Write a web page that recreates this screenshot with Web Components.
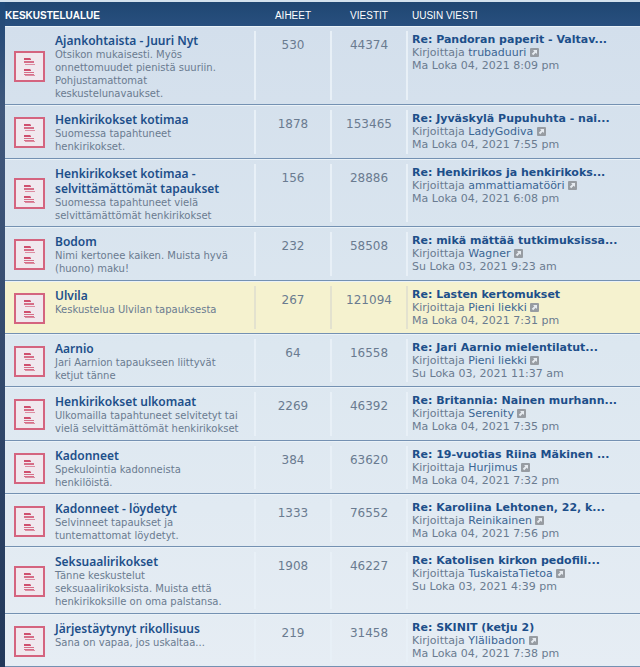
<!DOCTYPE html>
<html lang="fi">
<head>
<meta charset="utf-8">
<meta name="viewport" content="width=device-width, initial-scale=1">
<title>Keskustelualue</title>
<style>
  body {
    margin: 0;
    background-color: #e6eef5;
    font-family: "DejaVu Sans", Verdana, sans-serif;
    font-size: 11px;
    line-height: 13px;
    color: #6a7b90;
  }
</style>
</head>
<body>

<forum-list></forum-list>

<script>
const forums = [
  { title: "Ajankohtaista - Juuri Nyt", text: "Otsikon mukaisesti. Myös onnettomuudet pienistä suuriin. Pohjustamattomat keskustelunavaukset.", topics: 530, posts: 44374, last: "Re: Pandoran paperit - Valtav...", author: "trubaduuri", date: "Ma Loka 04, 2021 8:09 pm" },
  { title: "Henkirikokset kotimaa", text: "Suomessa tapahtuneet henkirikokset.", topics: 1878, posts: 153465, last: "Re: Jyväskylä Pupuhuhta - nai...", author: "LadyGodiva", date: "Ma Loka 04, 2021 7:55 pm" },
  { title: "Henkirikokset kotimaa - selvittämättömät tapaukset", text: "Suomessa tapahtuneet vielä selvittämättömät henkirikokset", topics: 156, posts: 28886, last: "Re: Henkirikos ja henkirikoks...", author: "ammattiamatööri", date: "Ma Loka 04, 2021 6:08 pm" },
  { title: "Bodom", text: "Nimi kertonee kaiken. Muista hyvä (huono) maku!", topics: 232, posts: 58508, last: "Re: mikä mättää tutkimuksissa...", author: "Wagner", date: "Su Loka 03, 2021 9:23 am" },
  { title: "Ulvila", text: "Keskustelua Ulvilan tapauksesta", topics: 267, posts: 121094, last: "Re: Lasten kertomukset", author: "Pieni liekki", date: "Ma Loka 04, 2021 7:31 pm", active: true },
  { title: "Aarnio", text: "Jari Aarnion tapaukseen liittyvät ketjut tänne", topics: 64, posts: 16558, last: "Re: Jari Aarnio mielentilatut...", author: "Pieni liekki", date: "Su Loka 03, 2021 11:37 am" },
  { title: "Henkirikokset ulkomaat", text: "Ulkomailla tapahtuneet selvitetyt tai vielä selvittämättömät henkirikokset", topics: 2269, posts: 46392, last: "Re: Britannia: Nainen murhann...", author: "Serenity", date: "Ma Loka 04, 2021 7:35 pm" },
  { title: "Kadonneet", text: "Spekulointia kadonneista henkilöistä.", topics: 384, posts: 63620, last: "Re: 19-vuotias Riina Mäkinen ...", author: "Hurjimus", date: "Ma Loka 04, 2021 7:32 pm" },
  { title: "Kadonneet - löydetyt", text: "Selvinneet tapaukset ja tuntemattomat löydetyt.", topics: 1333, posts: 76552, last: "Re: Karoliina Lehtonen, 22, k...", author: "Reinikainen", date: "Ma Loka 04, 2021 7:56 pm" },
  { title: "Seksuaalirikokset", text: "Tänne keskustelut seksuaalirikoksista. Muista että henkirikoksille on oma palstansa.", topics: 1908, posts: 46227, last: "Re: Katolisen kirkon pedofili...", author: "TuskaistaTietoa", date: "Su Loka 03, 2021 4:39 pm" },
  { title: "Järjestäytynyt rikollisuus", text: "Sana on vapaa, jos uskaltaa...", topics: 219, posts: 31458, last: "Re: SKINIT (ketju 2)", author: "Ylälibadon", date: "Ma Loka 04, 2021 7:38 pm" }
];

const iconTemplate = document.createElement("template");
iconTemplate.innerHTML = `
<style>
  :host {
    display: block;
    flex: none;
    width: 31px;
    height: 31px;
  }

  svg {
    display: block;
  }
</style>
<svg width="31" height="31" viewBox="0 0 31 31" aria-hidden="true">
  <rect x="1" y="1" width="29" height="29" fill="#f0e8ee" stroke="#d4647f" stroke-width="2"/>
  <g fill="#cf4f6e">
    <path d="M10 7h6l1 1v1h-7zM10 18h6l1 1v1h-7z"/>
    <path d="M10 10h10v2H10zM10 21h10v1H10zM10 23h10v1H10z" opacity=".8"/>
    <path d="M11 13h10v1H11zM11 24h10v1H11z" opacity=".6"/>
  </g>
</svg>
`;

class ForumIcon extends HTMLElement {
  connectedCallback() {
    this.attachShadow({ mode: "open" }).appendChild(iconTemplate.content.cloneNode(true));
  }
}

const infoTemplate = document.createElement("template");
infoTemplate.innerHTML = `
<style>
  :host {
    display: flex;
    align-items: center;
    gap: 10px;
    min-height: 41px;
  }

  .text {
    align-self: flex-start;
    font-size: 10px;
  }

  ::slotted(a) {
    display: block;
    font-family: "Noto Sans", "Open Sans", sans-serif;
    font-size: 12px;
    font-weight: 600;
    line-height: 15px;
    color: #1d4f8a;
    text-decoration: none;
  }

  ::slotted(a:hover) {
    text-decoration: underline;
  }
</style>
<forum-icon></forum-icon>
<div class="text">
  <slot name="title"></slot>
  <slot></slot>
</div>
`;

class ForumInfo extends HTMLElement {
  connectedCallback() {
    this.attachShadow({ mode: "open" }).appendChild(infoTemplate.content.cloneNode(true));
  }
}

const lastPostTemplate = document.createElement("template");
lastPostTemplate.innerHTML = `
<style>
  :host {
    display: block;
    white-space: nowrap;
  }

  ::slotted(a) {
    color: #3a6593;
    text-decoration: none;
  }

  ::slotted(a[slot="subject"]) {
    display: block;
    font-weight: bold;
    color: #1d4f8a;
  }

  ::slotted(a:hover) {
    text-decoration: underline;
  }

  svg {
    vertical-align: -1px;
  }
</style>
<slot name="subject"></slot>
<div>Kirjoittaja <slot name="author"></slot>
  <a href="#" aria-label="Näytä uusin viesti"><svg width="9" height="9" viewBox="0 0 9 9" aria-hidden="true">
    <rect width="9" height="9" rx="1" fill="#979ca2"/>
    <path d="M3 2h4v4L5.700 4.700 3.200 7.200 1.800 5.800 4.300 3.300z" fill="#e6ebf0"/>
  </svg></a>
</div>
<slot name="date"></slot>
`;

class LastPost extends HTMLElement {
  connectedCallback() {
    this.attachShadow({ mode: "open" }).appendChild(lastPostTemplate.content.cloneNode(true));
  }
}

const listTemplate = document.createElement("template");
listTemplate.innerHTML = `
<style>
  :host {
    display: block;
    border-top: 2px solid #d3e2ee;
  }

  .forabg {
    padding-left: 5px;
    background: linear-gradient(#1f4a78 0, #264b78 24px, #41587c 110px, #22385a 100%);
  }

  table {
    width: 100%;
    min-height: calc(100vh - 2px);
    border-collapse: separate;
    border-spacing: 0;
    table-layout: fixed;
  }

  .count {
    width: 76px;
  }

  .last {
    width: 234px;
  }

  thead {
    background: linear-gradient(#1f4772, #284f7e);
  }

  th {
    height: 24px;
    padding: 3px 0 0;
    font-family: "Liberation Sans", Arial, sans-serif;
    font-size: 10px;
    font-weight: normal;
    line-height: 12px;
    color: #fff;
    text-align: center;
    text-transform: uppercase;
    box-sizing: border-box;
  }

  th:first-child {
    font-weight: bold;
    text-align: left;
  }

  th.last {
    padding-left: 6px;
    text-align: left;
  }

  tbody {
    background: linear-gradient(#d3dfec, #dce7f0 50%, #e6edf4);
  }

  td {
    --divider: #e8f0f7;
    padding: 6px 0 4px;
    border-top: 1px solid #eaf2f8;
    border-bottom: 1px solid #7491b2;
    vertical-align: top;
    background: linear-gradient(var(--divider), var(--divider)) left center / 2px calc(100% - 8px) no-repeat;
  }

  td:first-child {
    padding-left: 9px;
    padding-right: 14px;
    background: none;
  }

  th.count,
  td.count {
    padding-left: 2px;
    box-sizing: border-box;
  }

  td.count {
    padding-top: 11px;
    font-size: 12px;
    line-height: 14px;
    text-align: center;
  }

  td.last {
    padding-left: 6px;
  }

  tr.active td {
    --divider: #e3e2cf;
    background-color: #f5f2cf;
  }
</style>
<div class="forabg">
  <table>
    <thead>
      <tr>
        <th scope="col">Keskustelualue</th>
        <th scope="col" class="count">Aiheet</th>
        <th scope="col" class="count">Viestit</th>
        <th scope="col" class="last">Uusin viesti</th>
      </tr>
    </thead>
    <tbody></tbody>
  </table>
</div>
`;

class ForumList extends HTMLElement {
  connectedCallback() {
    const shadowRoot = this.attachShadow({ mode: "open" });
    shadowRoot.appendChild(listTemplate.content.cloneNode(true));
    shadowRoot.querySelector("tbody").innerHTML = forums.map((forum) => `
      <tr class="${forum.active ? "active" : ""}">
        <td><forum-info><a slot="title" href="#">${forum.title}</a>${forum.text}</forum-info></td>
        <td class="count">${forum.topics}</td>
        <td class="count">${forum.posts}</td>
        <td class="last">
          <last-post>
            <a slot="subject" href="#">${forum.last}</a>
            <a slot="author" href="#">${forum.author}</a>
            <span slot="date">${forum.date}</span>
          </last-post>
        </td>
      </tr>`).join("");
  }
}

customElements.define("forum-icon", ForumIcon);
customElements.define("forum-info", ForumInfo);
customElements.define("last-post", LastPost);
customElements.define("forum-list", ForumList);
</script>
</body>
</html>
